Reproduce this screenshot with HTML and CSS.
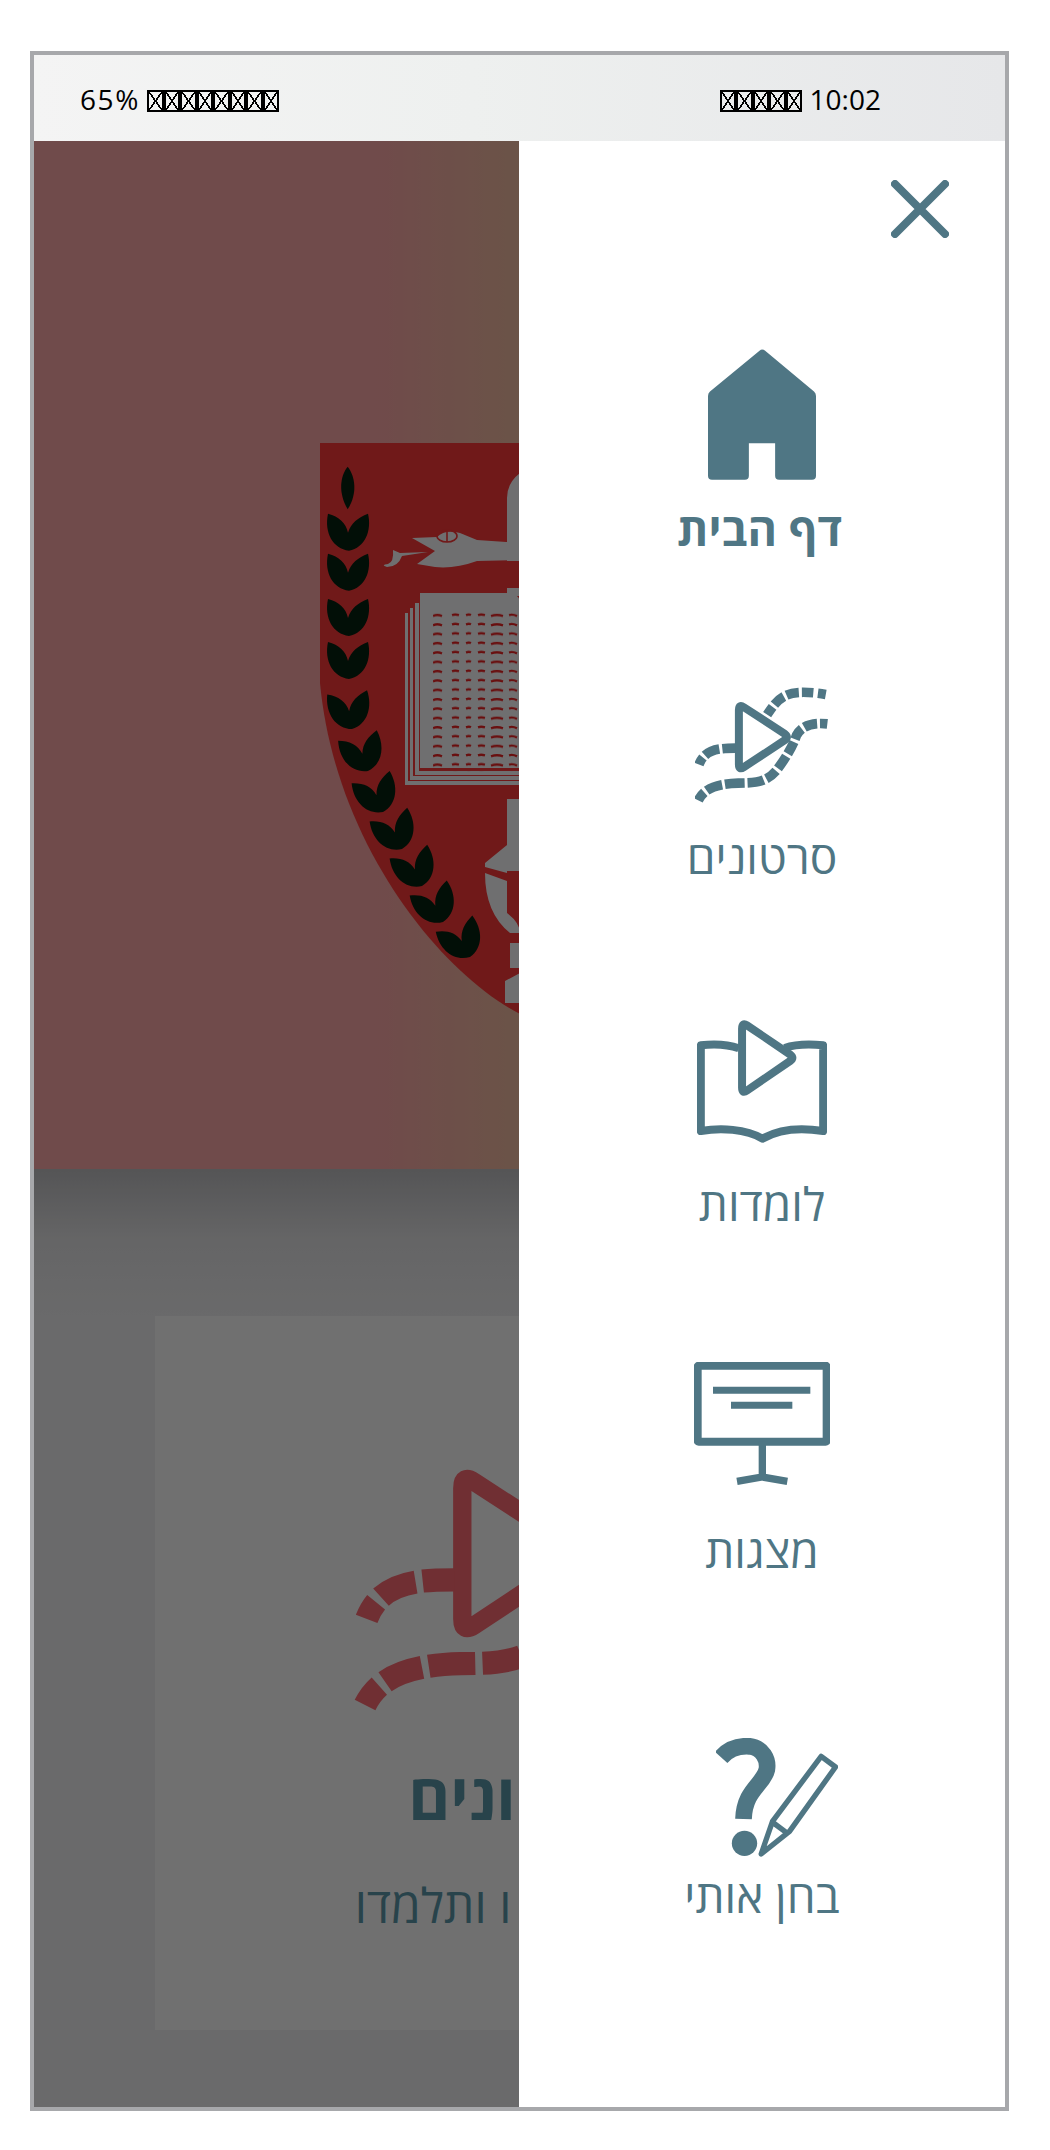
FILE: index.html
```html
<!DOCTYPE html>
<html lang="he">
<head>
<meta charset="utf-8">
<title>סרטונים</title>
<link rel="stylesheet" href="styles.css">
</head>
<body>
<div class="frame">
  <header class="status">
    <span class="status-group"><span class="status-pct">65%</span> <i class="tofu"></i><i class="tofu"></i><i class="tofu"></i><i class="tofu"></i><i class="tofu"></i><i class="tofu"></i><i class="tofu"></i><i class="tofu"></i></span>
    <span class="status-group"><i class="tofu"></i><i class="tofu"></i><i class="tofu"></i><i class="tofu"></i><i class="tofu"></i> 10:02</span>
  </header>
  <main class="main">
    <section class="hero">
      <svg class="crest" viewBox="0 0 400 620" aria-hidden="true">
        <defs>
          <pattern id="lines" x="113" y="168" width="87" height="9.35" patternUnits="userSpaceOnUse">
            <path class="crest-text" d="M0 5q4-2 9 0M19 4q3-1 7 0M33 4q3-1 5 0M45 4q3-1 7 0M58 5q6-2 12 0M76 4q4-1 8 1"/>
          </pattern>
          <path id="pair" d="M-21-37C-10-34-3-28-1-18 2-28 9-33 19-37 23-20 16-3 0 0-16-2-25-18-21-37Z"/>
          <g id="half">
            <path class="crest-red" d="M0 0H200V571C120 530 15 400 0 240Z"/>
            <g class="crest-leaf">
              <path d="M27.7 23.7C35 33 38 50 27.7 66.3 18 50 20 33 27.7 23.7Z"/>
              <use href="#pair" transform="translate(29 107.7)"/>
              <use href="#pair" transform="translate(29 147.7)"/>
              <use href="#pair" transform="translate(29 193)"/>
              <use href="#pair" transform="translate(29 236)"/>
              <use href="#pair" transform="translate(32 286) rotate(-6)"/>
              <use href="#pair" transform="translate(48 328) rotate(-15)"/>
              <use href="#pair" transform="translate(63 369) rotate(-18)"/>
              <use href="#pair" transform="translate(82 406) rotate(-20)"/>
              <use href="#pair" transform="translate(102 443) rotate(-20)"/>
              <use href="#pair" transform="translate(123 479) rotate(-22)"/>
              <use href="#pair" transform="translate(150 514) rotate(-24)"/>
            </g>
            <g class="crest-white">
              <path d="M187 118V55Q187 40 200 30V118ZM187 145H200V153H187Z"/>
              <path d="M92 95L117 94Q125 86 140 90L157 97 200 100V117L157 118Q135 126 115 124L97 121 115 108Z"/>
              <path d="M108 109L82 113Q78 124 67 124 60 122 68 121 74 119 73 107L80 110Z"/>
              <path d="M85 170h3v168h112v4H85ZM90 165h3v168h107v4H90ZM95 160h4v168h101v4H95Z"/>
              <path d="M100 150H190Q197 151 200 157V325H100Z"/>
              <path d="M187 356H200V428H187ZM165 420L187 402V430L165 424ZM165 430L187 438V470Q200 480 200 490H190Q165 470 165 430ZM190 500H200V525H190ZM185 538L200 530V560H185Z"/>
            </g>
            <rect x="113" y="168" width="87" height="161" fill="url(#lines)"/>
            <ellipse class="crest-eye" cx="127" cy="93" rx="10" ry="6"/>
            <path class="crest-eye" d="M127 87V99"/>
          </g>
        </defs>
        <use href="#half"/>
        <use href="#half" transform="translate(400) scale(-1 1)"/>
      </svg>
    </section>
    <section class="intro">
      <article class="card">
        <svg class="card-icon" viewBox="70 50 410 350" aria-hidden="true">
          <path class="vi-tri" d="M207 118Q207 100 222 110L345 190Q358 200 345 209L222 290Q207 300 207 282Z"/>
          <path class="vi-dash vi-a" d="M87 282C105 235 150 233 197 233"/>
          <path class="vi-dash vi-b" d="M292 132C320 90 340 65 400 65 430 65 450 68 472 72"/>
          <path class="vi-dash vi-c" d="M85 390C100 360 130 340 205 338 260 338 290 335 320 300 350 260 370 225 380 195 395 165 430 155 473 160"/>
        </svg>
        <h1 class="card-title">סרטונים</h1>
        <p class="card-text">צפו בזה. ו ותלמדו</p>
      </article>
    </section>
    <div class="overlay"></div>
    <nav class="drawer">
      <button class="close" aria-label="סגירה">
        <svg viewBox="0 0 58 58" class="close-icon"><path d="M4 4L54 54M54 4L4 54"/></svg>
      </button>
      <a class="nav-item nav-home">
        <svg class="nav-icon" width="108" height="131" viewBox="145 57 325 393" aria-hidden="true">
          <path class="fill" d="M300 62Q308 54 317 62L464 184Q470 189 470 198V438Q470 450 458 450H359Q347 450 347 438V340H268V438Q268 450 256 450H157Q145 450 145 438V198Q145 189 151 184Z"/>
        </svg>
        <span class="nav-label nav-label-strong">דף הבית</span>
      </a>
      <a class="nav-item nav-video">
        <svg class="nav-icon" width="133" height="117" viewBox="75 50 400 350" aria-hidden="true">
          <path class="line" d="M207 118Q207 100 222 110L345 190Q358 200 345 209L222 290Q207 300 207 282Z"/>
          <path class="line vd-a" d="M87 282C105 235 150 233 197 233"/>
          <path class="line vd-b" d="M292 132C320 90 340 65 400 65 430 65 450 68 472 72"/>
          <path class="line vd-c" d="M85 390C100 360 130 340 205 338 260 338 290 335 320 300 350 260 370 225 380 195 395 165 430 155 473 160"/>
        </svg>
        <span class="nav-label">סרטונים</span>
      </a>
      <a class="nav-item nav-book">
        <svg class="nav-icon" width="130" height="123" viewBox="82 58 390 370" aria-hidden="true">
          <path class="line" d="M207 143C170 130 130 130 93 134V392C150 382 230 385 278 415 330 385 400 382 461 392V134C420 130 380 130 345 142"/>
          <path class="line" d="M217 84Q217 64 232 74L362 162Q375 172 362 181L232 270Q217 281 217 262Z"/>
        </svg>
        <span class="nav-label">לומדות</span>
      </a>
      <a class="nav-item nav-screen">
        <svg class="nav-icon" width="136" height="123" viewBox="73 67 408 369" aria-hidden="true">
          <rect class="line" x="84" y="78" width="387" height="228" rx="3"/>
          <path class="fill" d="M130 141H422V162H130ZM184 186H368V207H184Z"/>
          <path class="line butt" d="M278 306V414M202 425L278 412 353 425"/>
        </svg>
        <span class="nav-label">מצגות</span>
      </a>
      <a class="nav-item nav-quiz">
        <svg class="nav-icon" width="122" height="119" viewBox="140 55 365 357" aria-hidden="true">
          <path class="line q-mark" d="M155 113C180 85 210 78 240 80 280 85 297 120 292 150 282 195 225 210 222 298"/>
          <circle class="fill" cx="225" cy="371" r="38"/>
          <path class="line q-pen" d="M275 403L309 305 455 110 498 142 360 335ZM312 310L355 342"/>
        </svg>
        <span class="nav-label">בחן אותי</span>
      </a>
    </nav>
  </main>
</div>
</body>
</html>
```
FILE: styles.css
```css
* { box-sizing: border-box; }
html, body { margin: 0; padding: 0; background: #fff; }
body { font-family: "Open Sans", "Noto Sans", "DejaVu Sans", sans-serif; }

.frame {
  width: 979px;
  height: 2060px;
  margin: 51px 0 0 30px;
  border: 4px solid #a7a8ab;
  display: flex;
  flex-direction: column;
}

.status {
  flex: none;
  height: 86px;
  padding: 2px 124px 0 46px;
  display: flex;
  align-items: center;
  justify-content: space-between;
  font-size: 28px;
  color: #000;
  background: linear-gradient(90deg, #f4f4f4, #eef0ef 45%, #e6e7e9);
}
.status-group { white-space: nowrap; }
.status-pct { letter-spacing: 1.6px; }
.tofu {
  display: inline-block;
  width: 16.5px;
  height: 22px;
  vertical-align: -2px;
  border: 2px solid #000;
  background:
    linear-gradient(to top right, transparent calc(50% - 0.8px), #000 calc(50% - 0.8px), #000 calc(50% + 0.8px), transparent calc(50% + 0.8px)),
    linear-gradient(to top left, transparent calc(50% - 0.8px), #000 calc(50% - 0.8px), #000 calc(50% + 0.8px), transparent calc(50% + 0.8px));
}

.main { position: relative; flex: 1; display: flex; flex-direction: column; overflow: hidden; }

.hero {
  flex: none;
  height: 1028px;
  padding-top: 302px;
  display: flex;
  justify-content: center;
  align-items: flex-start;
  background: linear-gradient(90deg, #ffaaaa 0, #ffaaaa 35%, #f3bfa4 50%, #f3bfa4 100%);
}
.crest { width: 400px; height: 620px; display: block; }
.crest-red { fill: #ff3939; }
.crest-leaf { fill: #052212; }
.crest-white { fill: #fdfdff; }
.crest-text { fill: none; stroke: #f02020; stroke-width: 2.2; }
.crest-eye { fill: none; stroke: #ff3939; stroke-width: 1.6; }

.intro {
  flex: 1;
  padding-top: 147px;
  display: flex;
  justify-content: center;
  align-items: flex-start;
  background: linear-gradient(180deg, #c1c1c4 0, #e6e6e8 70px, #f1f1f3 147px, #f1f1f3 100%);
}
.card {
  width: 730px;
  height: 714px;
  padding-top: 118px;
  display: flex;
  flex-direction: column;
  align-items: center;
  background: #fefefe;
}
.card-icon { width: 327px; height: 279px; margin-right: 6px; flex: none; }
.vi-tri, .vi-dash { fill: none; stroke: #ff6b74; }
.vi-tri { stroke-width: 23; stroke-linejoin: round; }
.vi-dash { stroke-width: 29; }
.vi-a { stroke-dasharray: 24 9 48 9 80 9; }
.vi-b { stroke-dasharray: 28 9 38 9 38 9 34 14 24 9; }
.vi-c { stroke-dasharray: 30 9 50 9 58 9 50 9 38 9 44 9 40 9 38 9 40 9 30 9; }
.card-title {
  margin: 43px 0 0;
  font-size: 64px;
  line-height: 80px;
  font-weight: 700;
  color: #5b98aa;
  direction: rtl;
}
.card-text {
  margin: 39px 0 0;
  font-size: 48px;
  line-height: 60px;
  white-space: nowrap;
  color: #5b98aa;
  direction: rtl;
}

.overlay { position: absolute; inset: 0; background: rgba(0, 0, 0, 0.56); }

.drawer {
  position: absolute;
  top: 0;
  right: 0;
  bottom: 0;
  width: 486px;
  padding-top: 39px;
  display: flex;
  flex-direction: column;
  align-items: center;
  background: #fff;
  color: #4f7684;
}
.close {
  align-self: flex-end;
  width: 58px;
  height: 58px;
  margin-right: 56px;
  padding: 0;
  border: 0;
  background: none;
  display: block;
}
.close-icon { display: block; width: 58px; height: 58px; }
.close-icon path { fill: none; stroke: #4f7684; stroke-width: 8; stroke-linecap: round; }

.nav-item { display: flex; flex-direction: column; align-items: center; }
.nav-icon { display: block; flex: none; }
.nav-icon .fill { fill: #4f7684; }
.nav-icon .line { fill: none; stroke: #4f7684; stroke-width: 24; stroke-linejoin: round; }
.nav-icon .butt { stroke-linejoin: miter; stroke-width: 22; }
.nav-icon .vd-a, .nav-icon .vd-b, .nav-icon .vd-c { stroke-width: 29; stroke-linejoin: miter; }
.vd-a { stroke-dasharray: 24 9 48 9 80 9; }
.vd-b { stroke-dasharray: 28 9 38 9 38 9 34 14 24 9; }
.vd-c { stroke-dasharray: 30 9 50 9 58 9 50 9 38 9 44 9 40 9 38 9 40 9 30 9; }
.nav-icon .q-mark { stroke-width: 50; stroke-linejoin: miter; }
.nav-icon .q-pen { stroke-width: 16; }
.nav-label {
  display: block;
  font-size: 46px;
  line-height: 50px;
  white-space: nowrap;
  direction: rtl;
}
.nav-label-strong { font-weight: 700; font-size: 45px; margin-right: 5px; }
.nav-home { margin-top: 111px; }
.nav-home .nav-label { margin-top: 24px; }
.nav-video { margin-top: 133px; }
.nav-video .nav-label { margin-top: 27px; }
.nav-book { margin-top: 139px; }
.nav-book .nav-label { margin-top: 35px; }
.nav-screen { margin-top: 134px; }
.nav-screen .nav-label { margin-top: 40px; }
.nav-quiz { margin-top: 163px; }
.nav-quiz .nav-icon { margin-left: 30px; }
.nav-quiz .nav-label { margin-top: 13px; }
```
